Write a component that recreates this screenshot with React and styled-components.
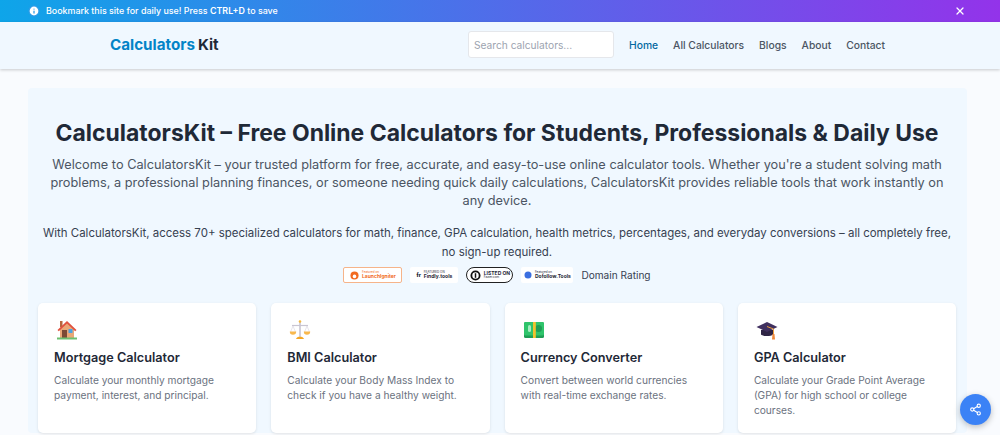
import React from 'react';
import styled, {createGlobalStyle} from 'styled-components';
import {Info, X, Share2} from 'lucide-react';

const GlobalStyle = createGlobalStyle`
    html, body {
        margin: 0;
        height: 435px;
        overflow: hidden;
        background: #f9fbfe;
        font-family: Inter, "Liberation Sans", sans-serif;
    }
    * { box-sizing: border-box; }
`;

const Banner = styled.div`
    height: 22px;
    padding: 0 34px 1px 28px;
    display: flex;
    align-items: center;
    justify-content: space-between;
    background: linear-gradient(90deg, #0ea5e9 0%, #9333ea 100%);
    color: #fff;
`;

const BannerText = styled.div`
    display: flex;
    align-items: center;
    gap: 6px;
    font-size: 8.9px;
    font-weight: 500;
    strong { font-weight: 600; }
`;

const Header = styled.header`
    height: 47px;
    padding: 0 115px 2px 110px;
    display: flex;
    align-items: center;
    justify-content: space-between;
    background: #f0f8ff;
    box-shadow: 0 1px 3px rgba(0, 0, 0, 0.2);
`;

const Logo = styled.a`
    font-size: 15.2px;
    font-weight: 700;
    color: #1f2937;
    display: flex;
    gap: 3px;
    span { color: #0284c7; }
`;

const Nav = styled.nav`
    display: flex;
    align-items: center;
    gap: 15px;
`;

const Search = styled.input`
    width: 146px;
    height: 27px;
    padding: 0 5px;
    border: 1px solid #e5e7eb;
    border-radius: 3px;
    background: #fff;
    font: 400 10.2px Inter, sans-serif;
    &::placeholder { color: #9ca3af; }
`;

const NavLink = styled.a`
    font-size: 10.3px;
    font-weight: 500;
    color: ${p => (p.$active ? '#0369a1' : '#4b5563')};
`;

const Hero = styled.main`
    margin: 19px 33px 0 28px;
    padding: 31px 11px 0 10px;
    background: #f0f8ff;
    border-radius: 4px;
    text-align: center;
`;

const Title = styled.h1`
    margin: 0 0 8px;
    font-size: 22.95px;
    line-height: 29px;
    font-weight: 700;
    color: #1f2937;
`;

const Lead = styled.p`
    margin: 0 0 14px;
    font-size: 12.75px;
    line-height: 18px;
    color: #4b5563;
`;

const Sub = styled.p`
    margin: 0 0 3px;
    font-size: 11.48px;
    line-height: 19px;
    color: #374151;
`;

const BadgeRow = styled.div`
    display: flex;
    justify-content: center;
    align-items: center;
    gap: 8px;
    height: 20px;
    margin-bottom: 18px;
`;

const Badge = styled.div`
    height: 16px;
    width: ${p => p.$w}px;
    display: flex;
    align-items: center;
    justify-content: center;
    gap: 3px;
    background: #fff;
    border-radius: ${p => (p.$round ? 8 : 2)}px;
    border: ${p => p.$border || 'none'};
    color: ${p => p.$color || '#1f2937'};
    font-size: 5px;
    line-height: 5px;
    font-weight: 700;
    text-align: left;
    small { display: block; font-size: 3px; line-height: 3.5px; font-weight: 400; }
`;

const DomainRating = styled.span`
    margin-left: 0;
    font-size: 10.1px;
    color: #374151;
`;

const Grid = styled.div`
    display: grid;
    grid-template-columns: repeat(4, 218.3px);
    gap: 15px;
    text-align: left;
`;

const Card = styled.article`
    height: 130px;
    padding: 16px 16px 0;
    background: #fff;
    border-radius: 5px;
    box-shadow: 0 1px 3px rgba(0, 0, 0, 0.1);
`;

const CardIcon = styled.svg`
    display: block;
    width: 22px;
    height: 22px;
    margin: 0 0 7px 2px;
`;

const CardTitle = styled.h3`
    margin: 0 0 5px;
    font-size: 12.7px;
    line-height: 20px;
    font-weight: 600;
    color: #1f2937;
`;

const CardText = styled.p`
    margin: 0;
    font-size: 10.2px;
    line-height: 15px;
    color: #6b7280;
`;

const ShareButton = styled.button`
    position: fixed;
    right: 9px;
    bottom: 10px;
    width: 31px;
    height: 31px;
    padding: 0;
    display: flex;
    align-items: center;
    justify-content: center;
    border: 0;
    border-radius: 50%;
    background: #3b82f6;
    color: #fff;
    box-shadow: 0 2px 6px rgba(0, 0, 0, 0.25);
`;

const House = () => (
    <CardIcon viewBox="0 0 22 22">
        <rect x="4" y="2" width="2.5" height="6" fill="#b5673f" />
        <path d="M4 10 11 3l7 7v9H4z" fill="#e9a877" />
        <path d="M1.5 11 11 2l9.5 9-1.3 1.2L11 4.6 2.8 12.2z" fill="#e0523f" />
        <rect x="6" y="11" width="5" height="8" fill="#7a4a35" />
        <rect x="12.5" y="10" width="4" height="4" rx=".5" fill="#4ba3e3" />
        <rect x="1" y="18.5" width="20" height="2" fill="#6cc070" />
    </CardIcon>
);

const Scales = () => (
    <CardIcon viewBox="0 0 22 22">
        <rect x="10.2" y="2.5" width="1.6" height="16" fill="#c9c5d2" />
        <circle cx="11" cy="2.5" r="1.3" fill="#f6b73c" />
        <path d="M3 6.5h16" stroke="#c9c5d2" strokeWidth="1.2" />
        <path d="M4 7 1.5 13M4 7l2.5 6M18 7l-2.5 6M18 7l2.5 6" stroke="#d8d4df" strokeWidth=".6" fill="none" />
        <path d="M.8 12.5h6.4a3.2 3.2 0 0 1-6.4 0zM14.8 12.5h6.4a3.2 3.2 0 0 1-6.4 0z" fill="#f8b84e" />
        <path d="M7 20c.5-1.6 2-2.2 4-2.2s3.5.6 4 2.2z" fill="#f5a623" />
    </CardIcon>
);

const Money = () => (
    <CardIcon viewBox="0 0 22 22">
        <rect x="1" y="3" width="20" height="16" rx="1.5" fill="#1f9d55" />
        <rect x="1" y="3" width="20" height="13.5" rx="1.5" fill="#2fc46b" />
        <rect x="5" y="6" width="3" height="7" rx="1.5" fill="#a6ecc0" />
        <circle cx="15.5" cy="9.5" r="3.5" fill="#1f9d55" />
        <rect x="10" y="3" width="2.8" height="16" fill="#f2c12e" />
    </CardIcon>
);

const GradCap = () => (
    <CardIcon viewBox="0 0 22 22">
        <path d="M5 11v4.500c2 2 10 2 12 0V11z" fill="#2f2545" />
        <path d="M.5 8 11 3l10.500 5L11 13z" fill="#40305f" />
        <path d="M11 7.500l6.500 2.500v6" stroke="#f0a03c" strokeWidth="1" fill="none" />
        <path d="M16.500 15h2l.5 5.500h-3z" fill="#f08a3c" />
    </CardIcon>
);

const cards = [
    {icon: House, title: 'Mortgage Calculator', text: 'Calculate your monthly mortgage payment, interest, and principal.'},
    {icon: Scales, title: 'BMI Calculator', text: 'Calculate your Body Mass Index to check if you have a healthy weight.'},
    {icon: Money, title: 'Currency Converter', text: 'Convert between world currencies with real-time exchange rates.'},
    {icon: GradCap, title: 'GPA Calculator', text: 'Calculate your Grade Point Average (GPA) for high school or college courses.'},
];

const App = () => {
    return (
        <>
            <GlobalStyle />
            <Banner>
                <BannerText>
                    <Info size={12} fill="#fff" stroke="#2b9be6" strokeWidth={2.5} />
                    <span>Bookmark this site for daily use! Press <strong>CTRL+D</strong> to save</span>
                </BannerText>
                <X size={12} strokeWidth={2.5} />
            </Banner>
            <Header>
                <Logo><span>Calculators</span>Kit</Logo>
                <Nav>
                    <Search placeholder="Search calculators..." />
                    <NavLink $active>Home</NavLink>
                    <NavLink>All Calculators</NavLink>
                    <NavLink>Blogs</NavLink>
                    <NavLink>About</NavLink>
                    <NavLink>Contact</NavLink>
                </Nav>
            </Header>
            <Hero>
                <Title>CalculatorsKit – Free Online Calculators for Students, Professionals &amp; Daily Use</Title>
                <Lead>Welcome to CalculatorsKit – your trusted platform for free, accurate, and easy-to-use online calculator tools. Whether you're a student solving math problems, a professional planning finances, or someone needing quick daily calculations, CalculatorsKit provides reliable tools that work instantly on any device.</Lead>
                <Sub>With CalculatorsKit, access 70+ specialized calculators for math, finance, GPA calculation, health metrics, percentages, and everyday conversions – all completely free, no sign-up required.</Sub>
                <BadgeRow>
                    <Badge $w={59} $border="1px solid #f6b48a" $color="#f26b21">
                        <svg width="9" height="9" viewBox="0 0 10 10"><circle cx="5" cy="5" r="4.500" fill="#f26b21" /><circle cx="5" cy="6" r="2" fill="#fff" /></svg>
                        <div><small>Featured on</small>LaunchIgniter</div>
                    </Badge>
                    <Badge $w={48}>
                        <b>fr</b>
                        <div><small>FEATURED ON</small>Findly.tools</div>
                    </Badge>
                    <Badge $w={47} $round $border="1px solid #222">
                        <svg width="11" height="11" viewBox="0 0 12 12"><circle cx="6" cy="6" r="4.500" fill="#fff" stroke="#111" strokeWidth="2" /><rect x="5.200" y="3.500" width="1.600" height="5" fill="#111" /></svg>
                        <div>LISTED ON<small>Fazier.com</small></div>
                    </Badge>
                    <Badge $w={52}>
                        <svg width="8" height="8" viewBox="0 0 8 8"><circle cx="4" cy="4" r="3.500" fill="#3b6fe0" /></svg>
                        <div><small>Featured on</small>Dofollow.Tools</div>
                    </Badge>
                    <DomainRating>Domain Rating</DomainRating>
                </BadgeRow>
                <Grid>
                    {cards.map(card => (
                        <Card key={card.title}>
                            <card.icon />
                            <CardTitle>{card.title}</CardTitle>
                            <CardText>{card.text}</CardText>
                        </Card>
                    ))}
                </Grid>
            </Hero>
            <ShareButton><Share2 size={13} /></ShareButton>
        </>
    );
};

export default App;
